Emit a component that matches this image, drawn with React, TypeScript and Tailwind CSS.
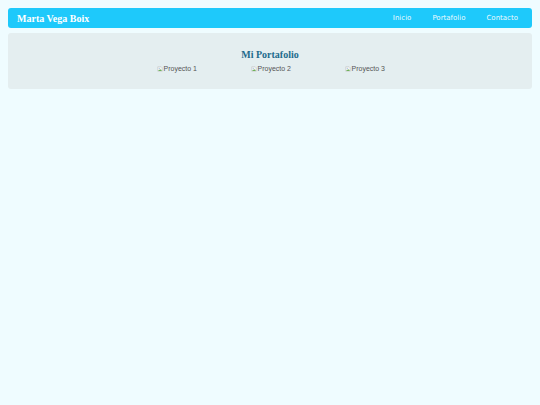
function BrokenImg({ alt }: { alt: string }) {
  return (
    <span className="inline-flex items-center text-[7px] leading-none text-[#555]" style={{ fontFamily: '"Liberation Sans", Arial, sans-serif' }}>
      <svg width="6" height="6" viewBox="0 0 16 16" className="mr-[0.5px]">
        <path d="M2 2h9l3 3v9H2z" fill="#f4f4f4" stroke="#a8a8a8" strokeWidth="1" />
        <path d="M3 13l3-4 2 2 2-3 3 5z" fill="#6cb058" />
        <circle cx="6" cy="6" r="1.3" fill="#5a9ad8" />
      </svg>
      {alt}
    </span>
  );
}

export default function App() {
  return (
    <div className="min-h-[405px] bg-[#effcff] p-2">
      <header className="flex h-5 items-center justify-between rounded-[3px] bg-[#1ec9fb] pl-[9px] pr-[14px]">
        <h1 className="text-[10px] font-bold text-white" style={{ fontFamily: '"Liberation Serif", "Times New Roman", serif' }}>
          Marta Vega Boix
        </h1>
        <nav className="flex gap-[21px] text-[7px] text-white/95" style={{ fontFamily: '"DejaVu Sans", sans-serif' }}>
          <a>Inicio</a>
          <a>Portafolio</a>
          <a>Contacto</a>
        </nav>
      </header>
      <section className="mt-[5px] flex h-14 flex-col items-center rounded-[3px] bg-[#e4eef0] pt-[17px]">
        <h2 className="text-[10px] font-bold leading-none text-[#1d6b8c]" style={{ fontFamily: '"Liberation Serif", "Times New Roman", serif' }}>
          Mi Portafolio
        </h2>
        <div className="mt-[5px] ml-[2px] flex gap-[54px]">
          <BrokenImg alt="Proyecto 1" />
          <BrokenImg alt="Proyecto 2" />
          <BrokenImg alt="Proyecto 3" />
        </div>
      </section>
    </div>
  );
}
